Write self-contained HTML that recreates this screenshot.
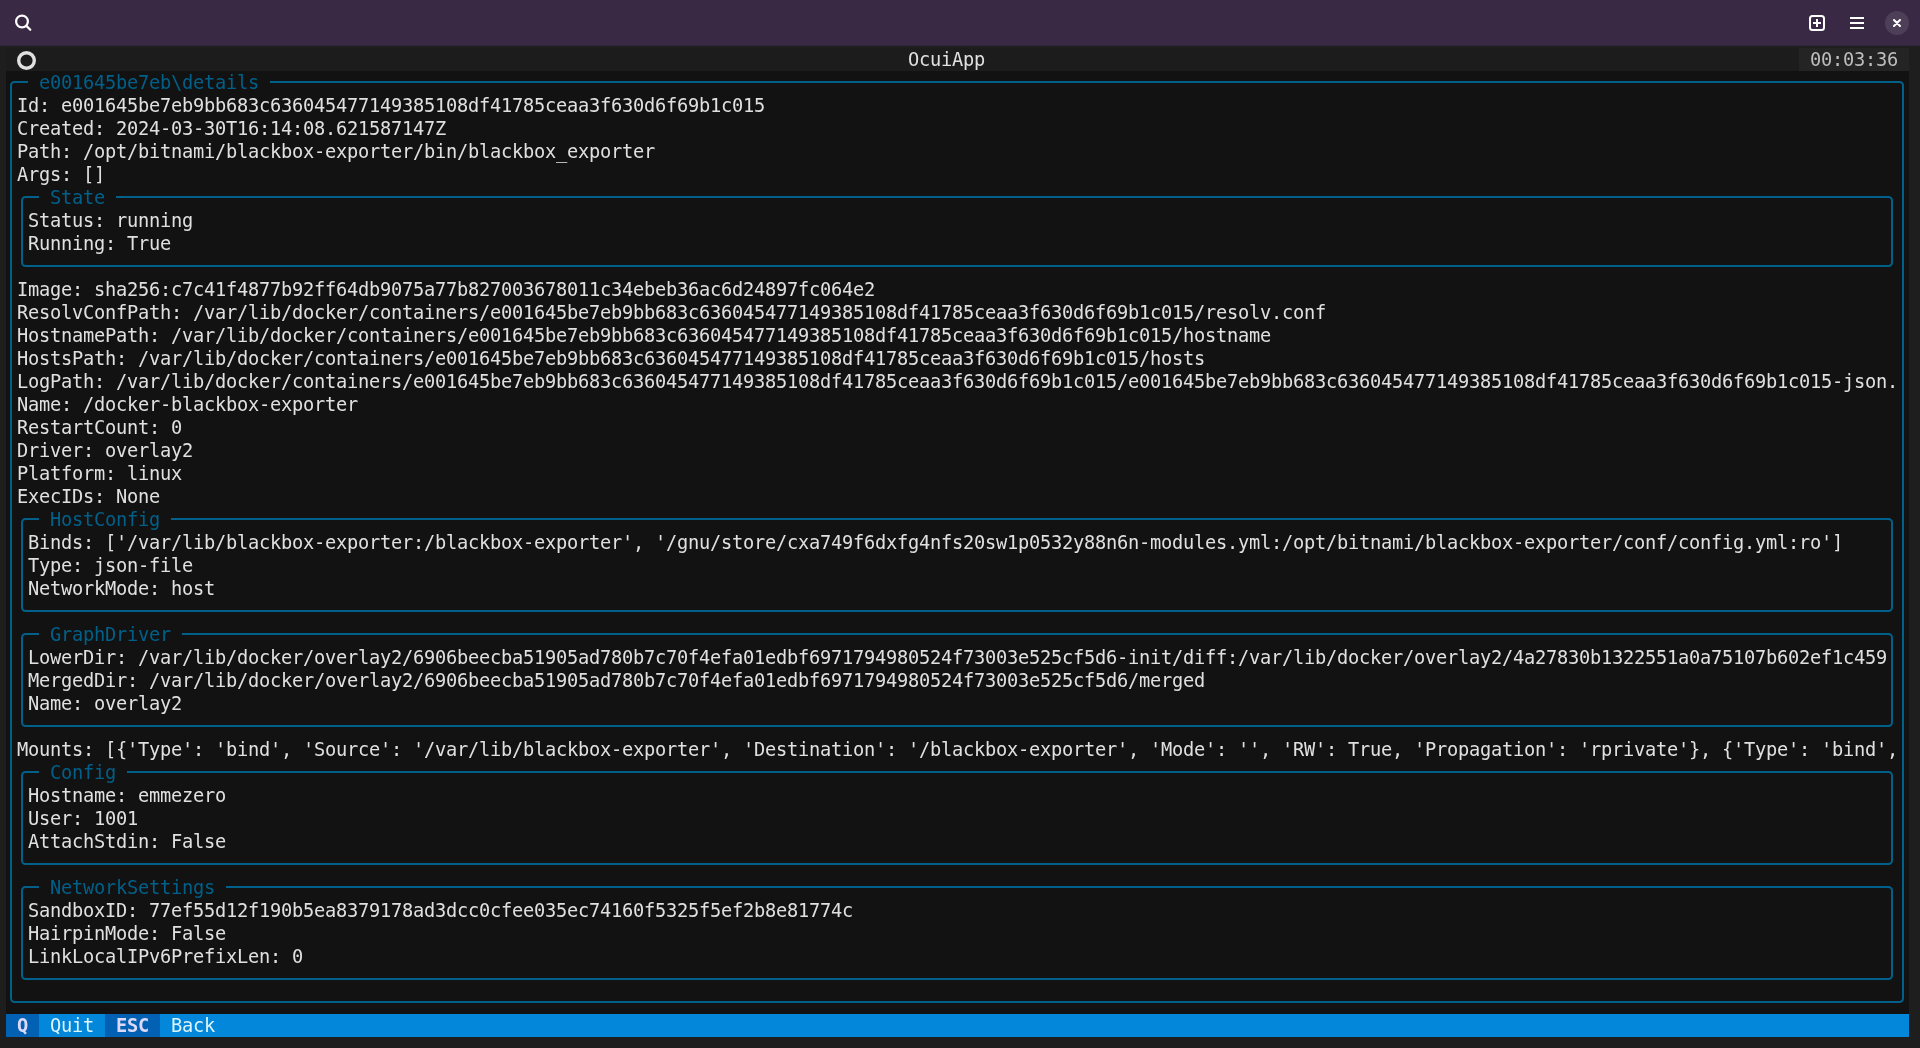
<!DOCTYPE html>
<html lang="en">
<head>
<meta charset="utf-8">
<title>OcuiApp</title>
<style>
html,body{margin:0;padding:0;}
body{width:1920px;height:1048px;overflow:hidden;background:#1e1e1e;position:relative;
font-family:"DejaVu Sans Mono","Liberation Mono",monospace;}
#bar{position:absolute;left:0;top:0;width:1920px;height:46px;background:#3a2944;box-shadow:inset 0 -1px 0 #33233c;}
#bar svg{position:absolute;left:0;top:0;}
#term{position:absolute;left:0;top:0;width:1920px;height:1048px;will-change:transform;}
#hdr{position:absolute;left:6px;top:48px;width:1903px;height:23px;background:#1c1c1c;}
#clk{position:absolute;left:1799px;top:48px;width:110px;height:23px;background:#242424;}
#scr{position:absolute;left:6px;top:71px;width:1903px;height:943px;background:#121212;}
#ftr{position:absolute;left:6px;top:1014px;width:1903px;height:23px;background:#0287da;}
.k{position:absolute;top:1014px;height:23px;background:#0361b3;}
.t{position:absolute;white-space:pre;font-size:18.667px;line-height:23px;height:23px;color:#e0e0e0;letter-spacing:-0.2321px;}
.b{color:#006089;}
.c{color:#bdbdbd;}
.w{color:#ddd9f8;font-weight:bold;}
.d{color:#ddf4fb;}
#lines{position:absolute;left:0;top:0;}
#lines path{fill:none;stroke:#006089;stroke-width:2;}
</style>
</head>
<body>
<div id="bar">
<svg width="1920" height="46" viewBox="0 0 1920 46" fill="none" stroke="#fff" stroke-width="2">
<circle cx="22" cy="21.5" r="5.9" stroke-width="2.2"/>
<path d="M26.4 25.9L30.3 29.8" stroke-width="2.2" stroke-linecap="round"/>
<rect x="1810" y="16" width="14" height="14" rx="2.5"/>
<path d="M1813 23H1821M1817 19V27"/>
<path d="M1850 18H1864M1850 23H1864M1850 28H1864"/>
<circle cx="1897" cy="23" r="12" fill="#4d3f57" stroke="none"/>
<path d="M1894 20L1900 26M1900 20L1894 26" stroke-width="2.1" stroke-linecap="round"/>
</svg>
</div>
<div id="term">
<div id="hdr"></div>
<div id="clk"></div>
<div id="scr"></div>
<div id="ftr"></div>
<div class="k" style="left:6px;width:33px"></div>
<div class="k" style="left:105px;width:55px"></div>
<svg id="lines" width="1920" height="1048" viewBox="0 0 1920 1048">
<path d="M28 82 H14.5 A3.5 3.5 0 0 0 11 85.5 V998.5 A3.5 3.5 0 0 0 14.5 1002 H1899.5 A3.5 3.5 0 0 0 1903 998.5 V85.5 A3.5 3.5 0 0 0 1899.5 82 H270"/>
<path d="M39 197 H25.5 A3.5 3.5 0 0 0 22 200.5 V262.5 A3.5 3.5 0 0 0 25.5 266 H1888.5 A3.5 3.5 0 0 0 1892 262.5 V200.5 A3.5 3.5 0 0 0 1888.5 197 H116"/>
<path d="M39 519 H25.5 A3.5 3.5 0 0 0 22 522.5 V607.5 A3.5 3.5 0 0 0 25.5 611 H1888.5 A3.5 3.5 0 0 0 1892 607.5 V522.5 A3.5 3.5 0 0 0 1888.5 519 H171"/>
<path d="M39 634 H25.5 A3.5 3.5 0 0 0 22 637.5 V722.5 A3.5 3.5 0 0 0 25.5 726 H1888.5 A3.5 3.5 0 0 0 1892 722.5 V637.5 A3.5 3.5 0 0 0 1888.5 634 H182"/>
<path d="M39 772 H25.5 A3.5 3.5 0 0 0 22 775.5 V860.5 A3.5 3.5 0 0 0 25.5 864 H1888.5 A3.5 3.5 0 0 0 1892 860.5 V775.5 A3.5 3.5 0 0 0 1888.5 772 H127"/>
<path d="M39 887 H25.5 A3.5 3.5 0 0 0 22 890.5 V975.5 A3.5 3.5 0 0 0 25.5 979 H1888.5 A3.5 3.5 0 0 0 1892 975.5 V890.5 A3.5 3.5 0 0 0 1888.5 887 H226"/>
<circle cx="26.5" cy="60.5" r="7.8" style="fill:none;stroke:#e0e0e0;stroke-width:3.4"/>
</svg>
<div class="t b" style="left:39px;top:71px">e001645be7eb\details</div>
<div class="t b" style="left:50px;top:186px">State</div>
<div class="t b" style="left:50px;top:508px">HostConfig</div>
<div class="t b" style="left:50px;top:623px">GraphDriver</div>
<div class="t b" style="left:50px;top:761px">Config</div>
<div class="t b" style="left:50px;top:876px">NetworkSettings</div>
<div class="t" style="left:17px;top:94px">Id: e001645be7eb9bb683c636045477149385108df41785ceaa3f630d6f69b1c015</div>
<div class="t" style="left:17px;top:117px">Created: 2024-03-30T16:14:08.621587147Z</div>
<div class="t" style="left:17px;top:140px">Path: /opt/bitnami/blackbox-exporter/bin/blackbox_exporter</div>
<div class="t" style="left:17px;top:163px">Args: []</div>
<div class="t" style="left:17px;top:278px">Image: sha256:c7c41f4877b92ff64db9075a77b827003678011c34ebeb36ac6d24897fc064e2</div>
<div class="t" style="left:17px;top:301px">ResolvConfPath: /var/lib/docker/containers/e001645be7eb9bb683c636045477149385108df41785ceaa3f630d6f69b1c015/resolv.conf</div>
<div class="t" style="left:17px;top:324px">HostnamePath: /var/lib/docker/containers/e001645be7eb9bb683c636045477149385108df41785ceaa3f630d6f69b1c015/hostname</div>
<div class="t" style="left:17px;top:347px">HostsPath: /var/lib/docker/containers/e001645be7eb9bb683c636045477149385108df41785ceaa3f630d6f69b1c015/hosts</div>
<div class="t" style="left:17px;top:370px">LogPath: /var/lib/docker/containers/e001645be7eb9bb683c636045477149385108df41785ceaa3f630d6f69b1c015/e001645be7eb9bb683c636045477149385108df41785ceaa3f630d6f69b1c015-json.</div>
<div class="t" style="left:17px;top:393px">Name: /docker-blackbox-exporter</div>
<div class="t" style="left:17px;top:416px">RestartCount: 0</div>
<div class="t" style="left:17px;top:439px">Driver: overlay2</div>
<div class="t" style="left:17px;top:462px">Platform: linux</div>
<div class="t" style="left:17px;top:485px">ExecIDs: None</div>
<div class="t" style="left:17px;top:738px">Mounts: [{'Type': 'bind', 'Source': '/var/lib/blackbox-exporter', 'Destination': '/blackbox-exporter', 'Mode': '', 'RW': True, 'Propagation': 'rprivate'}, {'Type': 'bind',</div>
<div class="t" style="left:28px;top:209px">Status: running</div>
<div class="t" style="left:28px;top:232px">Running: True</div>
<div class="t" style="left:28px;top:531px">Binds: ['/var/lib/blackbox-exporter:/blackbox-exporter', '/gnu/store/cxa749f6dxfg4nfs20sw1p0532y88n6n-modules.yml:/opt/bitnami/blackbox-exporter/conf/config.yml:ro']</div>
<div class="t" style="left:28px;top:554px">Type: json-file</div>
<div class="t" style="left:28px;top:577px">NetworkMode: host</div>
<div class="t" style="left:28px;top:646px">LowerDir: /var/lib/docker/overlay2/6906beecba51905ad780b7c70f4efa01edbf6971794980524f73003e525cf5d6-init/diff:/var/lib/docker/overlay2/4a27830b1322551a0a75107b602ef1c459</div>
<div class="t" style="left:28px;top:669px">MergedDir: /var/lib/docker/overlay2/6906beecba51905ad780b7c70f4efa01edbf6971794980524f73003e525cf5d6/merged</div>
<div class="t" style="left:28px;top:692px">Name: overlay2</div>
<div class="t" style="left:28px;top:784px">Hostname: emmezero</div>
<div class="t" style="left:28px;top:807px">User: 1001</div>
<div class="t" style="left:28px;top:830px">AttachStdin: False</div>
<div class="t" style="left:28px;top:899px">SandboxID: 77ef55d12f190b5ea8379178ad3dcc0cfee035ec74160f5325f5ef2b8e81774c</div>
<div class="t" style="left:28px;top:922px">HairpinMode: False</div>
<div class="t" style="left:28px;top:945px">LinkLocalIPv6PrefixLen: 0</div>
<div class="t" style="left:908px;top:48px">OcuiApp</div>
<div class="t c" style="left:1810px;top:48px">00:03:36</div>
<div class="t w" style="left:17px;top:1014px">Q</div>
<div class="t d" style="left:50px;top:1014px">Quit</div>
<div class="t w" style="left:116px;top:1014px">ESC</div>
<div class="t d" style="left:171px;top:1014px">Back</div>
</div>
</body>
</html>
